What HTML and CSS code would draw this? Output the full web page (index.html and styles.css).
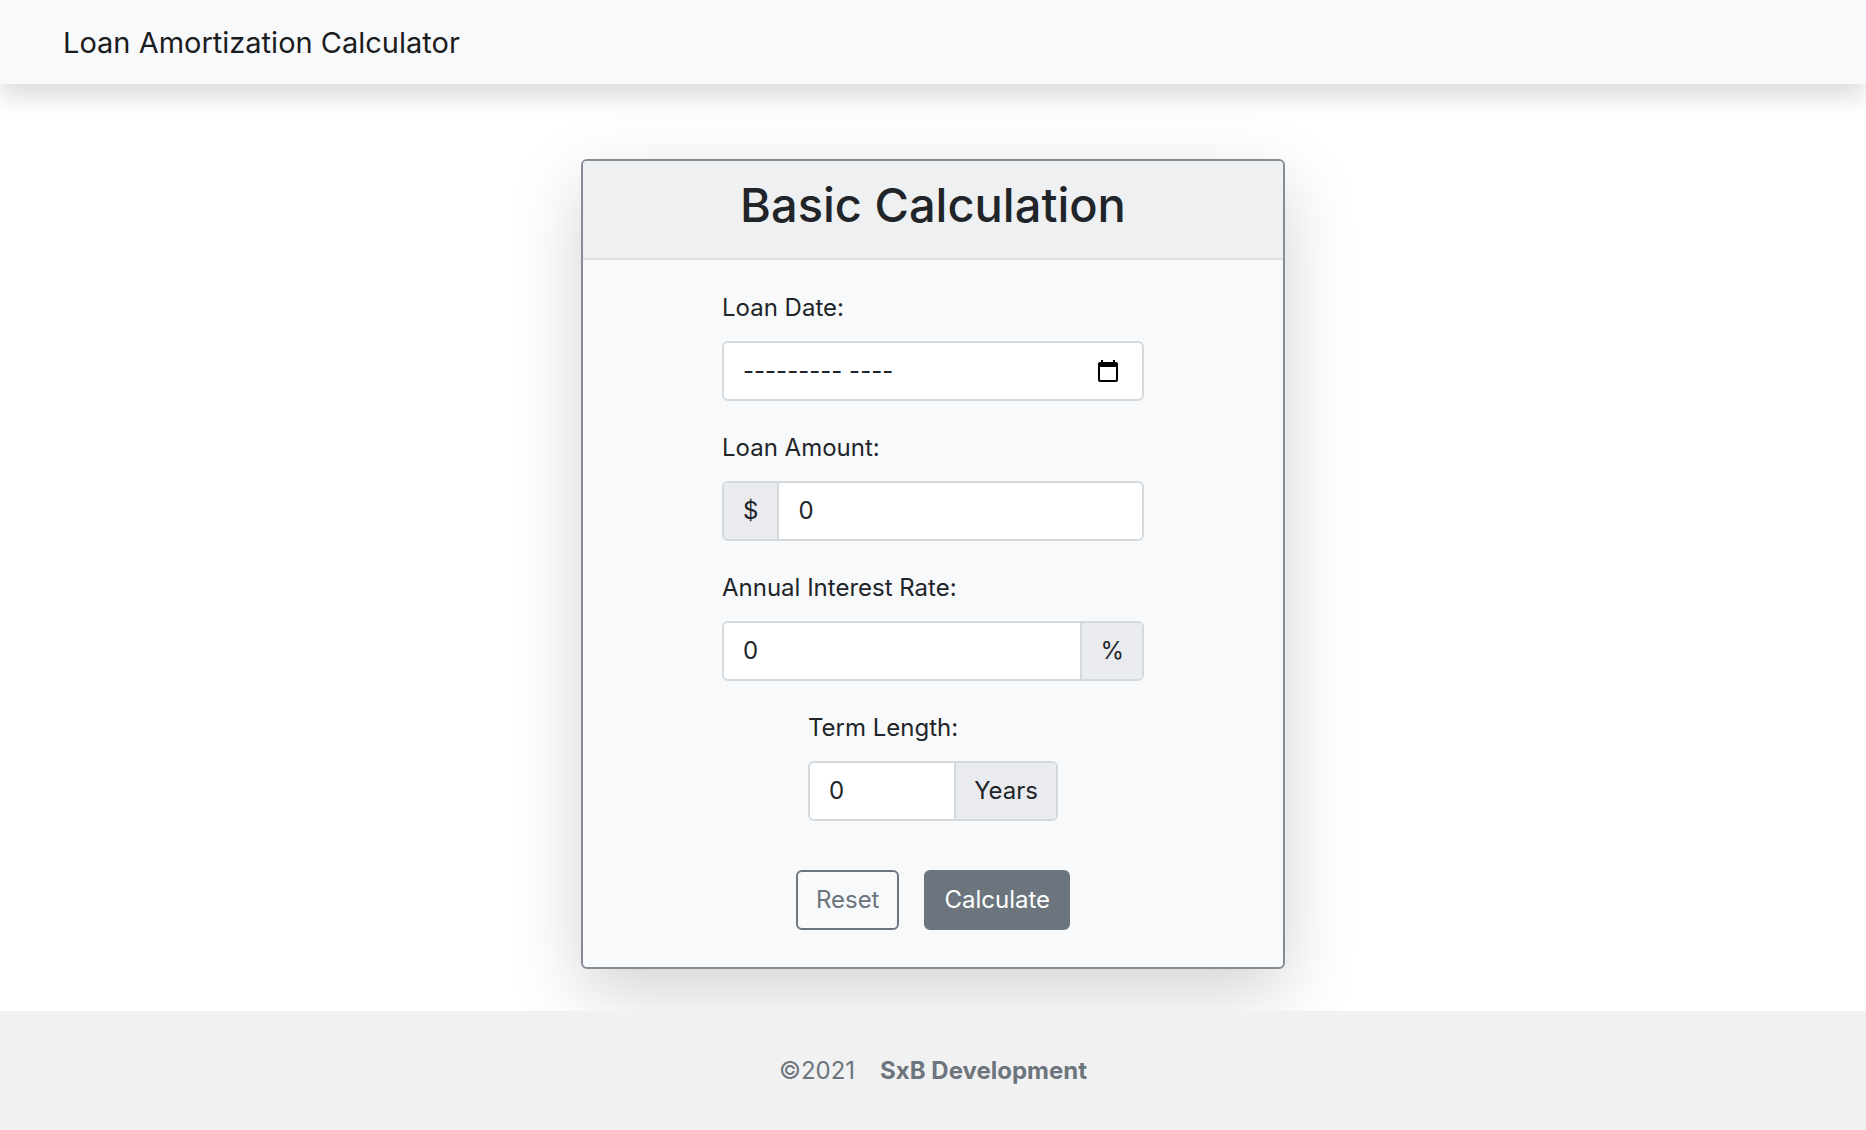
FILE: index.html
```html
<!DOCTYPE html>
<html lang="en">
<head>
  <meta charset="utf-8">
  <meta name="viewport" content="width=device-width, initial-scale=1">
  <title>Loan Amortization Calculator</title>
  <link rel="stylesheet" href="styles.css">
</head>
<body>
  <header class="navbar">
    <a class="brand" href="#">Loan Amortization Calculator</a>
  </header>

  <main class="content">
    <section class="card">
      <div class="card-header">
        <h1 class="card-title">Basic Calculation</h1>
      </div>
      <form class="card-body">
        <div class="field">
          <label for="loan-date">Loan Date:</label>
          <div class="input-group">
            <input class="control" id="loan-date" type="text" value="--------- ----">
            <button class="picker" type="button" aria-label="Choose date">
              <svg viewBox="0 0 24 24" width="24" height="24" aria-hidden="true">
                <path d="M20 3h-1V1h-2v2H7V1H5v2H4c-1.100 0-2 .9-2 2v16c0 1.100.9 2 2 2h16c1.100 0 2-.9 2-2V5c0-1.100-.9-2-2-2zm0 18H4V8h16v13z"/>
              </svg>
            </button>
          </div>
        </div>

        <div class="field">
          <label for="loan-amount">Loan Amount:</label>
          <div class="input-group">
            <span class="addon addon-start">$</span>
            <input class="control" id="loan-amount" type="text" inputmode="decimal" value="0">
          </div>
        </div>

        <div class="field">
          <label for="rate">Annual Interest Rate:</label>
          <div class="input-group">
            <input class="control" id="rate" type="text" inputmode="decimal" value="0">
            <span class="addon addon-end">%</span>
          </div>
        </div>

        <div class="field field-short">
          <label for="term">Term Length:</label>
          <div class="input-group">
            <input class="control" id="term" type="text" inputmode="numeric" value="0">
            <span class="addon addon-end">Years</span>
          </div>
        </div>

        <div class="actions">
          <button class="btn btn-outline" type="reset">Reset</button>
          <button class="btn btn-solid" type="submit">Calculate</button>
        </div>
      </form>
    </section>
  </main>

  <footer class="footer">
    <span>©2021</span>
    <strong>SxB Development</strong>
  </footer>
</body>
</html>
```
FILE: styles.css
```css
* {
  box-sizing: border-box;
}

body {
  margin: 0;
  min-height: 100vh;
  display: flex;
  flex-direction: column;
  background: #fff;
  color: #212529;
  font-family: Inter, "Liberation Sans", sans-serif;
  font-size: 24px;
  line-height: 36px;
}

.navbar {
  padding: 21px 63px 19px;
  background: #f8f9fb;
  box-shadow: 0 12px 24px rgba(0, 0, 0, 0.15);
}

.brand {
  display: block;
  color: #1a1c1e;
  font-size: 29px;
  line-height: 44px;
  text-decoration: none;
}

.content {
  flex: 1;
  padding: 75px 24px 41px;
}

.card {
  max-width: 704px;
  margin: 0 auto;
  border: 2px solid #868c94;
  border-radius: 6px;
  background: #f8f9fb;
  box-shadow: 0 24px 72px rgba(0, 0, 0, 0.175);
}

.card-header {
  padding: 14px 24px 23px;
  border-bottom: 2px solid #dcdee0;
  border-radius: 4px 4px 0 0;
  background: #eff0f2;
  text-align: center;
}

.card-title {
  margin: 0;
  font-size: 47px;
  font-weight: 500;
  line-height: 60px;
}

.card-body {
  display: flex;
  flex-direction: column;
  align-items: center;
  gap: 29px;
  padding: 30px 24px 37px;
}

.field {
  display: flex;
  flex-direction: column;
  gap: 15px;
  width: 100%;
  max-width: 422px;
}

.field-short {
  max-width: 250px;
}

.input-group {
  display: flex;
  height: 60px;
  border: 2px solid #d4d9de;
  border-radius: 6px;
  background: #fff;
  overflow: hidden;
}

.control {
  flex: 1;
  min-width: 0;
  padding: 0 19px;
  border: 0;
  outline: 0;
  background: transparent;
  color: inherit;
  font: inherit;
}

.addon {
  display: flex;
  align-items: center;
  background: #eaebef;
}

.addon-start {
  padding: 0 19px;
  border-right: 2px solid #d4d9de;
}

.addon-end {
  padding: 0 18px;
  border-left: 2px solid #d4d9de;
}

.picker {
  display: flex;
  align-items: center;
  padding: 0 22px;
  border: 0;
  background: transparent;
}

.actions {
  display: flex;
  gap: 25px;
  padding-top: 20px;
}

.btn {
  height: 60px;
  padding: 0 18px;
  border: 2px solid #6c757d;
  border-radius: 6px;
  font: inherit;
}

.btn-outline {
  background: transparent;
  color: #6c757d;
}

.btn-solid {
  background: #6c757d;
  color: #fff;
}

.footer {
  display: flex;
  justify-content: center;
  gap: 25px;
  padding: 42px 24px 41px;
  background: #f1f1f1;
  color: #6c757d;
  position: relative;
}
```
